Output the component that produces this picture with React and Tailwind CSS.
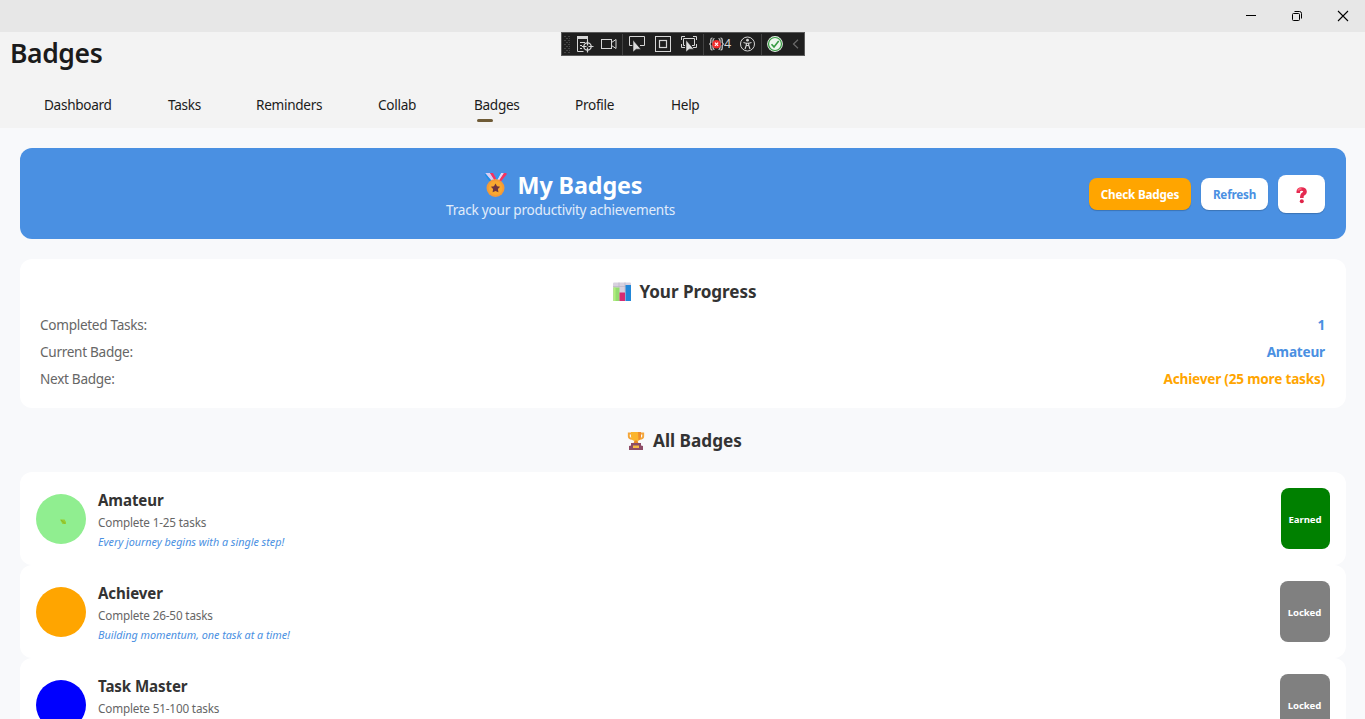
import React from "react";

const navItems = [
  { label: "Dashboard", width: "w-[124px]" },
  { label: "Tasks", width: "w-[88px]" },
  { label: "Reminders", width: "w-[122px]" },
  { label: "Collab", width: "w-[96px]" },
  { label: "Badges", width: "w-[101px]", active: true },
  { label: "Profile", width: "w-[96px]" },
  { label: "Help", width: "w-[60px]" },
];

const stats = [
  { label: "Completed Tasks:", value: "1", color: "text-[#4a90e2]" },
  { label: "Current Badge:", value: "Amateur", color: "text-[#4a90e2]" },
  { label: "Next Badge:", value: "Achiever (25 more tasks)", color: "text-[#ffa500]" },
];

const badges = [
  { name: "Amateur", range: "Complete 1-25 tasks", quote: "Every journey begins with a single step!", color: "bg-[#90ee90]", earned: true, leaf: true },
  { name: "Achiever", range: "Complete 26-50 tasks", quote: "Building momentum, one task at a time!", color: "bg-[#ffa500]" },
  { name: "Task Master", range: "Complete 51-100 tasks", color: "bg-[#0000ff]" },
];

function TitleBar() {
  return (
    <div className="-mr-px flex h-8 shrink-0 items-center justify-end bg-[#e7e7e7] text-black">
      <div className="flex w-[46px] justify-center">
        <svg width="12" height="12" viewBox="0 0 12 12" shapeRendering="crispEdges"><path d="M1 5.5h10" stroke="currentColor" /></svg>
      </div>
      <div className="flex w-[46px] justify-center">
        <svg width="12" height="12" viewBox="0 0 12 12" fill="none" stroke="currentColor">
          <rect x="1.5" y="3.5" width="7" height="7" rx="1" />
          <path d="M3.5 1.5h5a2 2 0 0 1 2 2v5" />
        </svg>
      </div>
      <div className="flex w-[46px] justify-center">
        <svg width="12" height="12" viewBox="0 0 12 12" stroke="currentColor" strokeWidth="1.1"><path d="M1 1l10 10M11 1L1 11" /></svg>
      </div>
    </div>
  );
}

function Separator() {
  return <div className="h-[21px] w-px bg-[#424242]" />;
}

function Pointer({ x, y }) {
  return <path d={`M${x} ${y}v12l3.2-2.8h4.6z`} fill="#dcdcdc" stroke="#1f1f1f" strokeWidth="0.5" />;
}

function DebugToolbar() {
  return (
    <div className="absolute left-[561px] top-8 flex h-6 w-[244px] items-center border border-[#5a5a5a] bg-[#1f1f1f] text-[#d6d6d6]">
      <svg className="ml-0.5" width="7" height="17" viewBox="0 0 7 17" fill="#464646" shapeRendering="crispEdges">
        {[0, 4, 8, 12, 16].map((y) => (
          <path key={y} d={`M0 ${y}h2v1h-2zM4 ${y}h2v1h-2zM2 ${y + 2}h2v1h-2zM5 ${y + 2}h1v1h-1z`} />
        ))}
      </svg>
      <svg className="ml-[5px]" width="18" height="18" viewBox="0 0 18 18" fill="none" stroke="currentColor">
        <path d="M1 2.5h11" strokeWidth="3" />
        <path d="M1.5 3v13.500h6M11.500 3v3M4 7.500h5M4 10.500h2M4 13.500h2" />
        <circle cx="11.500" cy="11.500" r="3.700" strokeWidth="1.3" />
        <path d="M11.500 5.500v5M11.500 12.500v5M5.800 11.500h4.700M12.500 11.500h5" strokeWidth="1.2" />
      </svg>
      <svg className="ml-[6px]" width="18" height="16" viewBox="0 0 18 16" fill="none" stroke="currentColor">
        <rect x="1.500" y="3.500" width="10" height="9" />
        <path d="M11.500 6.500l4.500-3v9l-4.500-3" />
      </svg>
      <div className="ml-1 flex"><Separator /></div>
      <svg className="ml-[5px]" width="18" height="18" viewBox="0 0 18 18" fill="none" stroke="currentColor">
        <path d="M4.500 10.500H1.500v-9h15v9h-4.500" />
        <Pointer x={5} y={5} />
      </svg>
      <svg className="ml-2" width="18" height="18" viewBox="0 0 18 18" fill="none" stroke="currentColor">
        <rect x="1.500" y="1.500" width="15" height="15" />
        <rect x="5.500" y="5.500" width="7" height="7" strokeWidth="1.2" />
      </svg>
      <svg className="ml-2" width="18" height="18" viewBox="0 0 18 18" fill="none" stroke="currentColor">
        <path d="M1.500 5V1.500H5M13 1.500h3.500V5M1.500 9v3.500H5M16.500 9v3.500H13" />
        <path d="M5 10.500H3.500v-7h11v7H12" />
        <Pointer x={6} y={5} />
      </svg>
      <div className="ml-[5px] flex"><Separator /></div>
      <svg className="ml-[5px]" width="15" height="14" viewBox="0 0 15 14" fill="none" stroke="currentColor">
        <path d="M3.500 1H3Q1.800 1 1.800 3v2.500L.7 7l1.100 1.500V11q0 2 1.200 2h.5M5.500 1.500Q4 1.500 4 3.500v7q0 2 1.500 2M11.500 1h.5q1.200 0 1.200 2v2.500L14.300 7l-1.100 1.500V11q0 2-1.200 2h-.5M9.500 1.500q1.500 0 1.500 2v7q0 2-1.500 2" strokeWidth="1.2" />
        <circle cx="7.500" cy="7.200" r="4.300" fill="#f02c2c" stroke="none" />
        <path d="M5.900 5.600l3.200 3.200M9.100 5.600L5.900 8.800" stroke="#fff" strokeWidth="1.2" />
      </svg>
      <span className="w-2 text-[12.500px] leading-none">4</span>
      <svg className="ml-2" width="16" height="16" viewBox="0 0 16 16" fill="none" stroke="currentColor">
        <circle cx="7.500" cy="8" r="7" />
        <circle cx="7.500" cy="4.200" r="1.400" fill="currentColor" stroke="none" />
        <path d="M3.500 6.500l2.800.8v2L5 13M11.500 6.500l-2.800.8v2l1.300 3.700M6.300 7.300h2.400M6.400 9.500h2.200" strokeWidth="1.100" />
      </svg>
      <div className="ml-[5px] flex"><Separator /></div>
      <svg className="ml-[5px]" width="16" height="16" viewBox="0 0 16 16" fill="none">
        <circle cx="8" cy="8" r="7.900" fill="#eef6ee" />
        <circle cx="8" cy="8" r="6.500" stroke="#379b42" strokeWidth="1.200" />
        <path d="M4.500 8.200l2.500 2.700 4.700-6" stroke="#379b42" strokeWidth="1.600" />
      </svg>
      <svg className="ml-[9px]" width="7" height="10" viewBox="0 0 7 10" fill="none" stroke="#6b6b6b" strokeWidth="1.200"><path d="M6 .800L1.500 5 6 9.200" /></svg>
    </div>
  );
}

function Medal() {
  return (
    <svg width="24" height="26" viewBox="0 0 24 26">
      <path d="M1 1h5l6 9H8.500z" fill="#d9cdf2" />
      <path d="M1 1l7.500 9-3-.5L1 3z" fill="#1c8fe8" />
      <path d="M6 1h3l4 7-1.500 2z" fill="#f8315f" />
      <path d="M17 1h3l-5 9h-3z" fill="#e4d8f5" />
      <path d="M14.500 1H17l-4.500 8-1.500-1z" fill="#2a9df4" />
      <path d="M20 1h2.500v1.500L16.500 10H14z" fill="#f8315f" />
      <circle cx="11.500" cy="16" r="9" fill="#f39a3a" />
      <circle cx="11.500" cy="16" r="7" fill="#faa92f" />
      <path d="M11.500 11.500l1.500 2.800 3.100.5-2.200 2.300.5 3.200-2.900-1.400-2.900 1.400.5-3.200-2.200-2.300 3.100-.5z" fill="#6d3441" />
    </svg>
  );
}

function Chart() {
  return (
    <svg width="20" height="20" viewBox="0 0 20 20">
      <rect x="1" y="0.500" width="18" height="18.500" rx="1" fill="#d8d1df" />
      <path d="M1 4.500h18M7 .5v5M13 .5v9" stroke="#bcb5c6" strokeWidth="0.700" />
      <rect x="1.500" y="5.500" width="6" height="13.500" fill="#93dc70" />
      <rect x="1.500" y="5.500" width="2" height="13.500" fill="#b2ef7e" />
      <rect x="7.500" y="10.500" width="5.500" height="8.500" fill="#d72c72" />
      <rect x="13.500" y="3" width="5.500" height="16" fill="#2287d8" />
    </svg>
  );
}

function Trophy() {
  return (
    <svg width="18" height="20" viewBox="0 0 18 20">
      <path d="M4 2.500H1.800v2.700q0 2.300 3.500 2.700M14 2.500h2.200v2.700q0 2.300-3.500 2.700" fill="none" stroke="#f4a63a" strokeWidth="1.900" />
      <path d="M4 1h10v4.500q0 4.500-5 4.500T4 5.500z" fill="#fbb52e" />
      <path d="M11 1h3v4.500q0 3-2.500 4z" fill="#ef8d2d" />
      <path d="M7.500 9.500h3l1 3h-5z" fill="#e88a25" />
      <path d="M4 12h10v2.500l2 .500v4H2v-4l2-.500z" fill="#8d4c66" />
      <rect x="6" y="14.500" width="6" height="2.500" fill="#f7ba45" />
    </svg>
  );
}

function QuestionMark() {
  return (
    <svg width="12" height="17" viewBox="0 0 12 17" fill="none">
      <path d="M2.300 6V4.500q0-2.500 3.200-2.500T9 4.500Q9 6.300 7.200 7 5.800 7.800 5.800 11" stroke="#e42a50" strokeWidth="3.600" />
      <path d="M2 3.500Q2.800 1.800 5.500 1.800" stroke="#ff6179" strokeWidth="2" />
      <circle cx="5.800" cy="14.300" r="2" fill="#df2449" />
    </svg>
  );
}

function BadgeCard({ badge }) {
  return (
    <div className="flex h-[93px] shrink-0 items-center rounded-xl bg-white px-4">
      <div className={`flex size-[50px] shrink-0 items-center justify-center rounded-full ${badge.color}`}>
        {badge.leaf && (
          <svg className="ml-1 mt-1.5" width="6" height="5" viewBox="0 0 6 5"><path d="M0 .5h4.500L6 3v2H2.500z" fill="#9acd32" /><path d="M1 1l4 3.500" stroke="#7eb52a" strokeWidth=".7" /></svg>
        )}
      </div>
      <div className="ml-3 flex h-[59px] flex-1 flex-col whitespace-nowrap">
        <span className="text-[15.1px] font-bold leading-[23px] tracking-[-0.1px] text-[#333333]">{badge.name}</span>
        <span className="text-[11.7px] leading-[21px] tracking-[-0.15px] text-[#666666]">{badge.range}</span>
        {badge.quote && <span className="text-[10.8px] italic leading-[17px] tracking-[-0.02px] text-[#4a90e2]">{badge.quote}</span>}
      </div>
      {badge.earned ? (
        <div className="flex h-[61px] w-[49px] items-center justify-center rounded-lg bg-[#008000] pt-[3px] pr-px text-[9.6px] font-bold tracking-[-0.1px] text-white">Earned</div>
      ) : (
        <div className="flex h-[61px] w-[50px] items-center justify-center rounded-lg bg-[#808080] pt-[3px] pr-px text-[9.6px] font-bold tracking-[-0.1px] text-white">Locked</div>
      )}
    </div>
  );
}

export default function App() {
  return (
    <div className="relative flex h-[719px] w-[1365px] flex-col overflow-hidden bg-[#f8f9fb] font-['Noto_Sans','Open_Sans',sans-serif]">
      <TitleBar />
      <header className="flex h-24 shrink-0 flex-col bg-[#f3f3f3] text-[#1b1b1b]">
        <h1 className="ml-[10px] h-[50px] text-[26.5px] font-semibold leading-[42px] tracking-[-0.4px]">Badges</h1>
        <nav className="ml-[44px] flex text-[13.6px] leading-[45px] tracking-[-0.3px]">
          {navItems.map((item) => (
            <div key={item.label} className={`flex h-[46px] flex-col ${item.width}`}>
              <span className="h-[37px]">{item.label}</span>
              {item.active && <span className="ml-[3px] h-[3px] w-4 rounded-full bg-[#6f5b36]" />}
            </div>
          ))}
        </nav>
      </header>
      <DebugToolbar />
      <main className="flex flex-1 flex-col pl-5 pr-[19px] pt-5">
        <section className="flex h-[91px] shrink-0 items-center rounded-xl bg-[#4a90e2] pl-5 pr-[21px]">
          <div className="flex flex-1 flex-col items-center whitespace-nowrap pr-0.5 pt-[5px]">
            <div className="flex items-center pl-[5px]">
              <div className="-mt-0.5"><Medal /></div>
              <h2 className="ml-[10px] text-[23.3px] font-bold leading-[29px] tracking-[-0.1px] text-white">My Badges</h2>
            </div>
            <p className="h-[21px] text-[13.6px] leading-[19px] tracking-[-0.24px] text-[#e1ecfa]">Track your productivity achievements</p>
          </div>
          <div className="ml-[6px] flex items-center gap-2.5">
            <button className="h-8 w-[102px] rounded-lg bg-[#ffa500] pt-0.5 text-[11.7px] font-bold tracking-[-0.2px] text-white shadow-[0_1px_1px_rgba(0,0,0,0.2)]">Check Badges</button>
            <button className="h-8 w-[67px] rounded-lg bg-white pt-0.5 text-[11.7px] font-bold tracking-[-0.2px] text-[#4a90e2] shadow-[0_1px_1px_rgba(0,0,0,0.2)]">Refresh</button>
            <button className="flex h-[38px] w-[47px] items-center justify-center rounded-lg bg-white pt-[3px] shadow-[0_1px_1px_rgba(0,0,0,0.2)]"><QuestionMark /></button>
          </div>
        </section>
        <section className="mt-5 flex h-[149px] shrink-0 flex-col rounded-xl bg-white pl-5 pr-[21px] pt-5">
          <div className="flex h-[26px] items-center justify-center pl-1">
            <Chart />
            <h3 className="ml-[7px] text-[17.1px] font-bold tracking-[-0.05px] text-[#333333]">Your Progress</h3>
          </div>
          <div className="mt-[6px] flex flex-col text-[13.6px] leading-[27px]">
            {stats.map((s) => (
              <div key={s.label} className="flex justify-between">
                <span className="tracking-[-0.3px] text-[#666666]">{s.label}</span>
                <span className={`font-bold tracking-[-0.2px] ${s.color}`}>{s.value}</span>
              </div>
            ))}
          </div>
        </section>
        <div className="flex h-16 shrink-0 items-center justify-center pl-[3px] pt-0.5">
          <Trophy />
          <h3 className="ml-2 text-[17.2px] font-bold text-[#333333]">All Badges</h3>
        </div>
        {badges.map((b) => (
          <BadgeCard key={b.name} badge={b} />
        ))}
      </main>
    </div>
  );
}
